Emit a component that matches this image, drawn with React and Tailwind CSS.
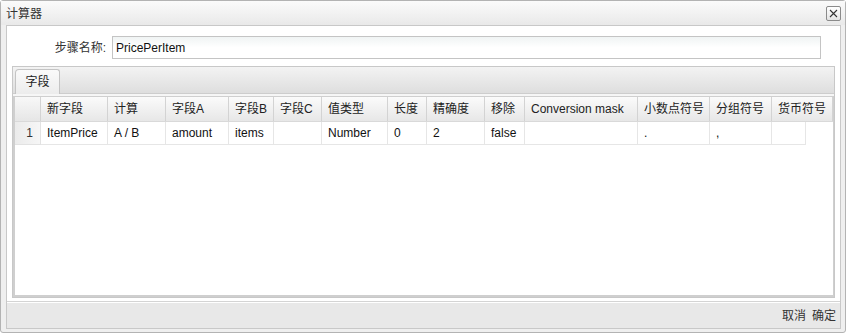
const FONT = { fontFamily: '"Liberation Sans", Arial, "Noto Sans CJK SC", sans-serif' };

const columns = [
  { title: "新字段", w: 67, value: "ItemPrice" },
  { title: "计算", w: 58, value: "A / B" },
  { title: "字段A", w: 63, value: "amount" },
  { title: "字段B", w: 45, value: "items" },
  { title: "字段C", w: 48, value: "" },
  { title: "值类型", w: 66, value: "Number" },
  { title: "长度", w: 39, value: "0" },
  { title: "精确度", w: 58, value: "2" },
  { title: "移除", w: 40, value: "false" },
  { title: "Conversion mask", w: 113, value: "" },
  { title: "小数点符号", w: 72, value: "." },
  { title: "分组符号", w: 62, value: "," },
  { title: "货币符号", w: 61, value: "", dataW: 34 },
];

function CloseButton() {
  return (
    <button className="w-[15px] h-[15px] border border-[#8a8a8a] rounded-[2px] bg-linear-to-b from-white to-[#e4e4e4] flex items-center justify-center">
      <svg width="9" height="9" viewBox="0 0 9 9">
        <path d="M1 1 L8 8 M8 1 L1 8" stroke="#333" strokeWidth="1.1" />
      </svg>
    </button>
  );
}

export default function App() {
  return (
    <div className="w-[847px] h-[336px] bg-white text-[12px] text-[#222]" style={FONT}>
      <div className="w-[846px] h-[333px] border border-[#b3b3b3] rounded-[3px] bg-[#efefef] flex flex-col pl-[5px] pr-[4px] pb-[3px]">
        {/* title */}
        <div className="h-[24px] -mx-[5px] -mr-[4px] pl-[5px] pr-[4px] bg-linear-to-b from-[#fbfbfb] to-[#e9e9e9] flex items-center justify-between">
          <span className="text-[#333] pt-[1px]">计算器</span>
          <CloseButton />
        </div>

        {/* frame */}
        <div className="flex-1 border border-[#c8c8c8] flex flex-col">
          <div className="flex-1 bg-white flex flex-col pl-[5px] pr-[4px] pt-[10px] pb-[3px] border-b border-[#d4d4d4]">
            <div className="flex items-center">
              <div className="w-[100px] text-right pr-[6px] text-[#333]">步骤名称:</div>
              <div className="w-[709px] h-[23px] border border-[#c4c4c4] bg-linear-to-b from-[#f0f4f4] to-white via-white flex items-center px-[3px] text-[#111]">
                PricePerItem
              </div>
            </div>

            {/* tab panel */}
            <div className="mt-[7px] flex-1 w-[823px] border border-[#c8c8c8] flex flex-col bg-[#f4f4f4]">
              <div className="h-[27px] bg-linear-to-b from-[#f3f3f3] to-[#dedede] border-b border-[#cdcdcd] flex items-end pl-[2px]">
                <div className="w-[45px] h-[25px] -mb-[1px] border border-[#c4c4c4] border-b-0 rounded-tl-[4px] rounded-tr-[3px] bg-linear-to-b from-[#fafafa] to-[#ececec] flex items-center justify-center text-[#222]">
                  字段
                </div>
              </div>
              <div className="h-[2px] bg-[#f6f6f6]" />
              <div className="flex-1 bg-white border border-[#cfcfcf] border-l-2 border-b-2 w-[821px]">
                {/* header */}
                <div className="flex h-[25px] border-b border-[#d9d9d9]">
                  <div className="w-[26px] shrink-0 bg-linear-to-b from-[#f8f8f8] to-[#e6e6e6] border-r border-[#d3d3d3]" />
                  {columns.map((c) => (
                    <div
                      key={c.title}
                      className="shrink-0 bg-linear-to-b from-[#fbfbfb] to-[#e7e7e7] border-r border-[#d3d3d3] flex items-center pl-[6px] whitespace-nowrap overflow-hidden text-[#222]"
                      style={{ width: c.w }}
                    >
                      {c.title}
                    </div>
                  ))}
                </div>
                {/* data row */}
                <div className="flex h-[23px]">
                  <div className="w-[26px] shrink-0 bg-linear-to-r from-[#ebebeb] to-[#f6f6f6] border-r border-b border-[#e2e2e2] flex items-center justify-end pr-[7px] text-[#333]">
                    1
                  </div>
                  {columns.map((c) => (
                    <div
                      key={c.title}
                      className="shrink-0 border-r border-b border-[#e6e6e6] flex items-center pl-[6px] whitespace-nowrap overflow-hidden text-[#111]"
                      style={{ width: c.dataW || c.w }}
                    >
                      {c.value}
                    </div>
                  ))}
                </div>
              </div>
            </div>
          </div>

          {/* footer */}
          <div className="h-[26px] bg-[#e8e8e8] border-t border-white flex items-center justify-end gap-[6px] pr-[4px] text-[#333]">
            <span>取消</span>
            <span>确定</span>
          </div>
        </div>
      </div>
    </div>
  );
}
